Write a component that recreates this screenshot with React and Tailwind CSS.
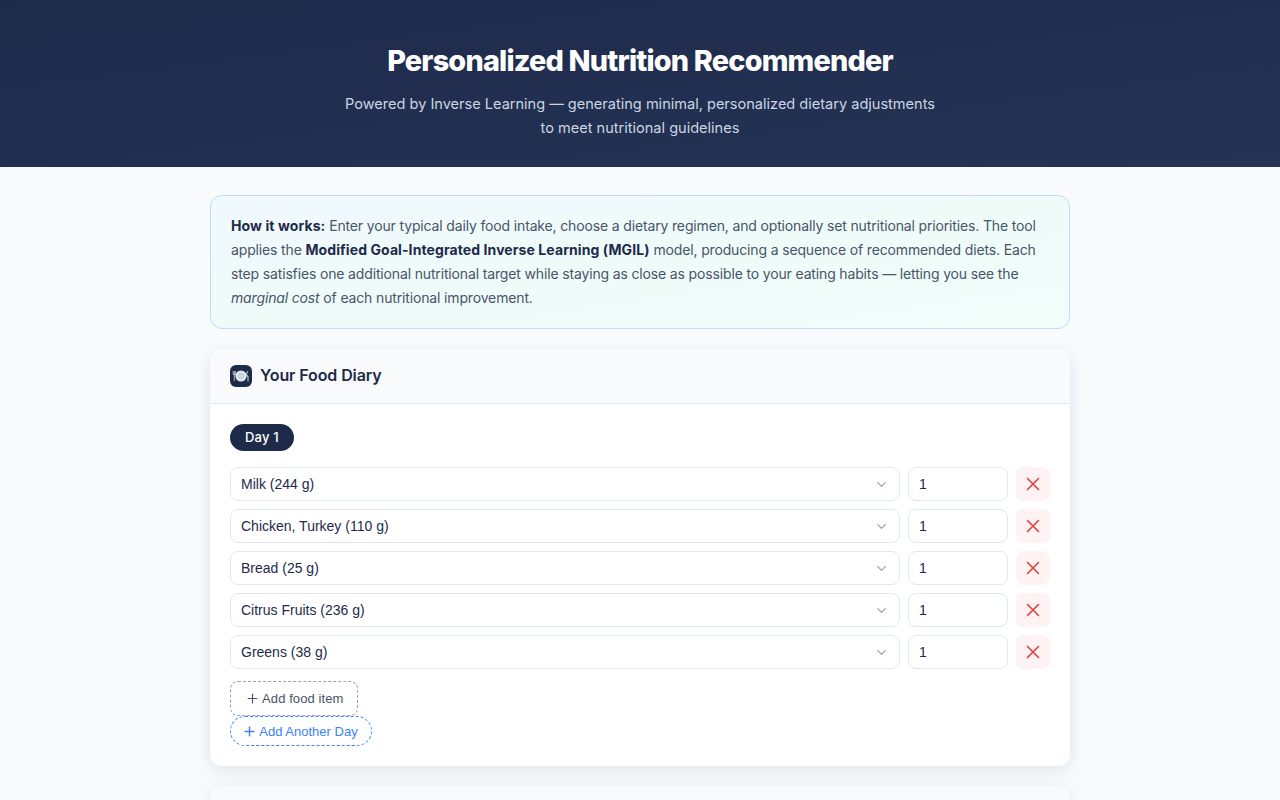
import { useState } from "react";
import { ChevronDown, Plus, X } from "lucide-react";

const FOOD_OPTIONS = [
  "Milk (244 g)",
  "Chicken, Turkey (110 g)",
  "Bread (25 g)",
  "Citrus Fruits (236 g)",
  "Greens (38 g)",
];

function PlateIcon() {
  return (
    <svg viewBox="0 0 22 22" className="w-[22px] h-[22px]">
      <circle cx="11" cy="11" r="5.6" fill="#e2e8f0" />
      <circle cx="11" cy="11" r="3.4" fill="#cbd5e1" />
      <path d="M3.2 6v3.5M4.3 6v10M5.4 6v3.5M3.2 9.5h2.2" stroke="#e2e8f0" strokeWidth="0.7" fill="none" />
      <path d="M18 6c-1.2 1-1.4 3-1.2 5h1.2v5.5" stroke="#e2e8f0" strokeWidth="0.9" fill="none" />
    </svg>
  );
}

function FoodRow({ food }) {
  const [value, setValue] = useState(food);
  const [qty, setQty] = useState(1);

  return (
    <div className="flex gap-2">
      <div className="relative flex-1">
        <select
          value={value}
          onChange={(e) => setValue(e.target.value)}
          className="w-full h-[34px] appearance-none rounded-lg border border-[#e2e8f0] bg-white pl-[10px] pr-8 font-['Liberation_Sans',sans-serif] text-[14px] text-[#1e2a4a] outline-none"
        >
          {FOOD_OPTIONS.map((f) => (
            <option key={f}>{f}</option>
          ))}
        </select>
        <ChevronDown className="absolute right-[11px] top-[10px] w-[15px] h-[15px] text-[#94a3b8] pointer-events-none" strokeWidth={2} />
      </div>
      <input
        type="text"
        value={qty}
        onChange={(e) => setQty(e.target.value)}
        className="w-[100px] h-[34px] rounded-lg border border-[#e2e8f0] bg-white px-[10px] font-['Liberation_Sans',sans-serif] text-[14px] text-[#1e2a4a] outline-none"
      />
      <button className="w-[34px] h-[34px] rounded-lg bg-[#fef2f2] flex items-center justify-center text-[#e53e3e]">
        <X className="w-[22px] h-[22px]" strokeWidth={1.7} />
      </button>
    </div>
  );
}

export default function App() {
  return (
    <div className="min-h-screen h-[800px] overflow-hidden bg-[#f8fafc] font-['Inter',sans-serif] text-[#1e2a4a]">
      {/* Header */}
      <header className="h-[167px] bg-gradient-to-br from-[#1e2a4a] to-[#243356] pt-[41px] text-center">
        <h1 className="text-[28.8px] leading-[40px] font-extrabold tracking-[-0.8px] text-white">
          Personalized Nutrition Recommender
        </h1>
        <p className="mt-[11px] text-[14.55px] leading-[24px] text-[#cbd5e1]">
          Powered by Inverse Learning — generating minimal, personalized dietary adjustments
          <br />
          to meet nutritional guidelines
        </p>
      </header>

      <main className="w-[860px] mx-auto pt-[28px] flex flex-col gap-5">
        {/* How it works */}
        <div className="rounded-xl border border-[#bfdbfe] bg-gradient-to-br from-[#f0f9ff] via-[#effbf9] to-[#f0fdf9] px-5 py-[18px] text-[14px] leading-[24px] tracking-[-0.15px] text-[#475569]">
          <strong className="font-bold tracking-[0.09px] text-[#1e2a4a]">How it works:</strong> Enter your typical daily food intake,
          choose a dietary regimen, and optionally set nutritional priorities. The tool applies the{" "}
          <strong className="font-bold tracking-[0.09px] text-[#1e2a4a]">Modified Goal-Integrated Inverse Learning (MGIL)</strong>{" "}
          model, producing a sequence of recommended diets. Each step satisfies one additional nutritional target while
          staying as close as possible to your eating habits — letting you see the <em>marginal cost</em> of each
          nutritional improvement.
        </div>

        {/* Food diary */}
        <section className="rounded-xl bg-white shadow-[0_4px_16px_rgba(30,42,74,0.1)]">
          <div className="h-[55px] flex items-center gap-2 px-5 bg-[#f8fafc] border-b border-[#e2e8f0] rounded-t-xl">
            <div className="w-[22px] h-[22px] rounded-md bg-[#1e2a4a] flex items-center justify-center">
              <PlateIcon />
            </div>
            <h2 className="pb-[2px] text-[16px] font-semibold tracking-[-0.1px]">Your Food Diary</h2>
          </div>

          <div className="px-5 pt-5 pb-5">
            <span className="inline-flex h-[27px] items-center rounded-full bg-[#1e2a4a] px-[15px] text-[13px] font-medium tracking-[0.2px] text-white">
              Day 1
            </span>

            <div className="mt-4 flex flex-col gap-2">
              {FOOD_OPTIONS.map((f) => (
                <FoodRow key={f} food={f} />
              ))}
            </div>

            <button className="mt-3 flex h-[35px] w-[128px] items-center justify-center gap-[2.5px] rounded-lg border border-dashed border-[#94a3b8] font-['Liberation_Sans',sans-serif] text-[13px] tracking-[0.08px] text-[#475569]">
              <Plus className="w-[15px] h-[15px]" strokeWidth={1.75} />
              Add food item
            </button>
            <button className="flex h-[30px] w-[142px] items-center justify-center gap-[2px] rounded-full border border-dashed border-[#3b82f6] pr-[2px] font-['Liberation_Sans',sans-serif] text-[13px] text-[#3b82f6]">
              <Plus className="w-[15px] h-[15px]" strokeWidth={2.25} />
              Add Another Day
            </button>
          </div>
        </section>

        {/* Next card, cut off by the window */}
        <section className="h-[200px] rounded-xl bg-[#f8fafc] shadow-[0_4px_16px_rgba(30,42,74,0.1)]" />
      </main>
    </div>
  );
}
